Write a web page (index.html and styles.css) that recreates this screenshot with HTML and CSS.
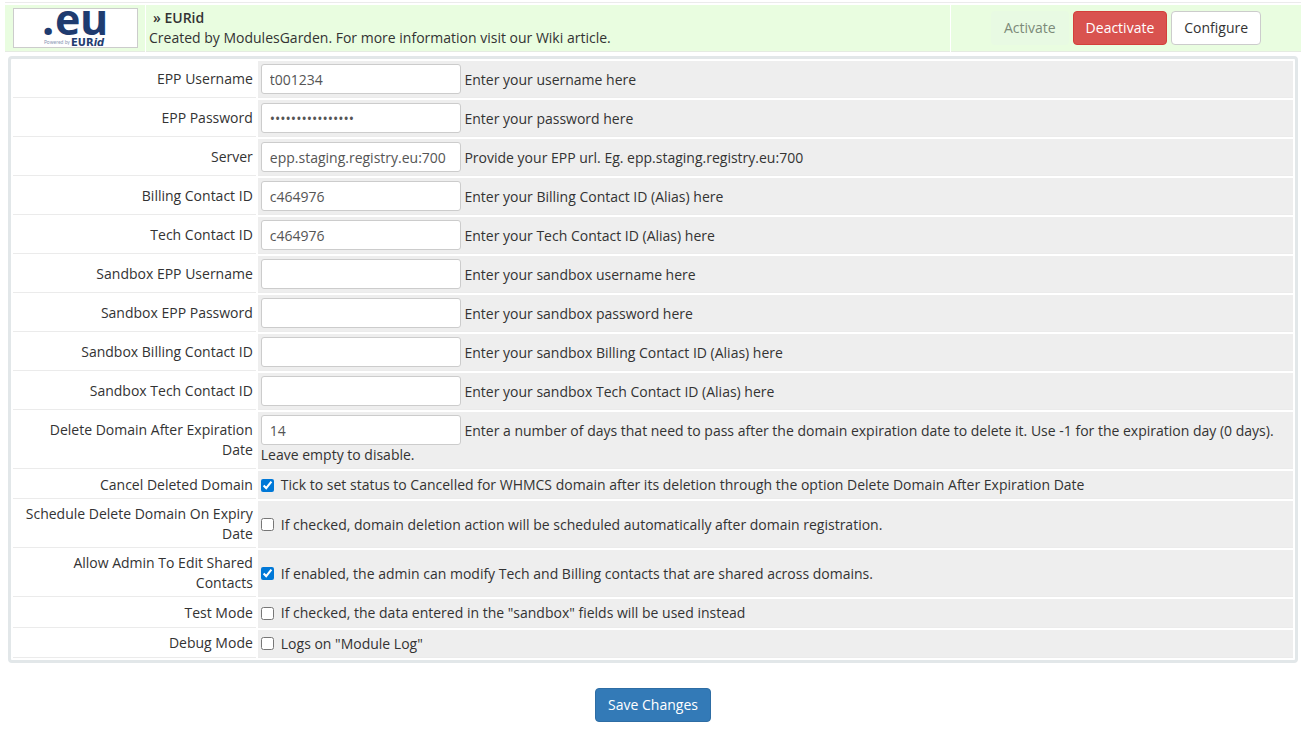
FILE: index.html
```
<!DOCTYPE html>
<html lang="en">
<head>
  <meta charset="UTF-8">
  <meta name="viewport" content="width=device-width, initial-scale=1.0">
  <title>Domain Registrars</title>
  <link rel="stylesheet" href="styles.css">
</head>
<body>
  <!-- Registrar header -->
  <div class="registrar">
    <div class="registrar-logo">
      <svg class="logo" width="125" height="40" viewBox="0 0 125 40" role="img" aria-label=".eu EURid">
        <rect x="0.5" y="0.5" width="124" height="39" fill="#fff" stroke="#ccc"/>
        <text class="logo-eu" x="29 42 67" y="27">.eu</text>
        <text class="logo-powered" x="31" y="36">Powered by</text>
        <text class="logo-eurid" x="58" y="38">EUR<tspan font-style="italic">id</tspan></text>
      </svg>
    </div>
    <div class="registrar-info">
      <strong class="registrar-name">» EURid</strong>
      <div>Created by ModulesGarden. For more information visit our Wiki article.</div>
    </div>
    <div class="registrar-actions">
      <button type="button" class="btn btn-activate" disabled>Activate</button>
      <button type="button" class="btn btn-danger">Deactivate</button>
      <button type="button" class="btn btn-default">Configure</button>
    </div>
  </div>

  <!-- Module settings -->
  <form class="config">
    <table class="form">
      <tr>
        <td class="fieldlabel"><label for="username">EPP Username</label></td>
        <td class="fieldarea"><input type="text" id="username" class="form-control" value="t001234"> Enter your username here</td>
      </tr>
      <tr>
        <td class="fieldlabel"><label for="password">EPP Password</label></td>
        <td class="fieldarea"><input type="password" id="password" class="form-control" value="abcdefgh12345678"> Enter your password here</td>
      </tr>
      <tr>
        <td class="fieldlabel"><label for="server">Server</label></td>
        <td class="fieldarea"><input type="text" id="server" class="form-control" value="epp.staging.registry.eu:700"> Provide your EPP url. Eg. epp.staging.registry.eu:700</td>
      </tr>
      <tr>
        <td class="fieldlabel"><label for="billing">Billing Contact ID</label></td>
        <td class="fieldarea"><input type="text" id="billing" class="form-control" value="c464976"> Enter your Billing Contact ID (Alias) here</td>
      </tr>
      <tr>
        <td class="fieldlabel"><label for="tech">Tech Contact ID</label></td>
        <td class="fieldarea"><input type="text" id="tech" class="form-control" value="c464976"> Enter your Tech Contact ID (Alias) here</td>
      </tr>
      <tr>
        <td class="fieldlabel"><label for="sandbox-username">Sandbox EPP Username</label></td>
        <td class="fieldarea"><input type="text" id="sandbox-username" class="form-control"> Enter your sandbox username here</td>
      </tr>
      <tr>
        <td class="fieldlabel"><label for="sandbox-password">Sandbox EPP Password</label></td>
        <td class="fieldarea"><input type="password" id="sandbox-password" class="form-control"> Enter your sandbox password here</td>
      </tr>
      <tr>
        <td class="fieldlabel"><label for="sandbox-billing">Sandbox Billing Contact ID</label></td>
        <td class="fieldarea"><input type="text" id="sandbox-billing" class="form-control"> Enter your sandbox Billing Contact ID (Alias) here</td>
      </tr>
      <tr>
        <td class="fieldlabel"><label for="sandbox-tech">Sandbox Tech Contact ID</label></td>
        <td class="fieldarea"><input type="text" id="sandbox-tech" class="form-control"> Enter your sandbox Tech Contact ID (Alias) here</td>
      </tr>
      <tr>
        <td class="fieldlabel"><label for="delete-days">Delete Domain After Expiration Date</label></td>
        <td class="fieldarea"><input type="text" id="delete-days" class="form-control" value="14"> Enter a number of days that need to pass after the domain expiration date to delete it. Use -1 for the expiration day (0 days). Leave empty to disable.</td>
      </tr>
      <tr class="check-row">
        <td class="fieldlabel"><label for="cancel-deleted">Cancel Deleted Domain</label></td>
        <td class="fieldarea"><input type="checkbox" id="cancel-deleted" checked><label for="cancel-deleted">Tick to set status to Cancelled for WHMCS domain after its deletion through the option Delete Domain After Expiration Date</label></td>
      </tr>
      <tr class="check-row">
        <td class="fieldlabel"><label for="schedule-delete">Schedule Delete Domain On Expiry Date</label></td>
        <td class="fieldarea"><input type="checkbox" id="schedule-delete"><label for="schedule-delete">If checked, domain deletion action will be scheduled automatically after domain registration.</label></td>
      </tr>
      <tr class="check-row">
        <td class="fieldlabel"><label for="edit-shared">Allow Admin To Edit Shared Contacts</label></td>
        <td class="fieldarea"><input type="checkbox" id="edit-shared" checked><label for="edit-shared">If enabled, the admin can modify Tech and Billing contacts that are shared across domains.</label></td>
      </tr>
      <tr class="check-row">
        <td class="fieldlabel"><label for="test-mode">Test Mode</label></td>
        <td class="fieldarea"><input type="checkbox" id="test-mode"><label for="test-mode">If checked, the data entered in the "sandbox" fields will be used instead</label></td>
      </tr>
      <tr class="check-row">
        <td class="fieldlabel"><label for="debug-mode">Debug Mode</label></td>
        <td class="fieldarea"><input type="checkbox" id="debug-mode"><label for="debug-mode">Logs on "Module Log"</label></td>
      </tr>
    </table>
    <div class="form-actions">
      <button type="submit" class="btn btn-primary">Save Changes</button>
    </div>
  </form>
</body>
</html>
```
FILE: styles.css
```
* {
  box-sizing: border-box;
}

body {
  margin: 0;
  padding: 2px 5px 0;
  background-color: #fff;
  color: #333;
  font-family: "Open Sans", sans-serif;
  font-size: 14px;
  line-height: 20px;
}

/* Registrar header */
.registrar {
  display: flex;
  gap: 1px;
  border-top: 1px solid #ebebeb;
  padding-top: 2px;
}

.registrar > div {
  background-color: #e9fde0;
  border-bottom: 1px solid #e5ebe2;
  padding: 3px;
}

.registrar-logo {
  width: 140px;
  text-align: center;
}

.logo {
  display: block;
  margin: 0 auto;
  overflow: visible;
}

.logo-eu {
  font-size: 43px;
  font-weight: 700;
  fill: #1f3c70;
}

.logo-powered {
  font-family: Lato, sans-serif;
  font-size: 5px;
  fill: #8b99b5;
}

.logo-eurid {
  font-family: "DejaVu Sans", sans-serif;
  font-size: 10px;
  font-weight: 700;
  fill: #1f3c70;
}

.registrar-info {
  flex: 1;
}

.registrar-name {
  margin-left: 4px;
  font-weight: 600;
}

.registrar-actions {
  width: 350px;
  display: flex;
  align-items: center;
  justify-content: center;
  gap: 4px;
}

/* Buttons */
.btn {
  height: 34px;
  padding: 0 12px;
  border: 1px solid transparent;
  border-radius: 4px;
  font-family: inherit;
  font-size: 14px;
  line-height: 20px;
  cursor: pointer;
}

.btn-activate {
  background-color: #e8fae3;
  color: #7c8a79;
  cursor: not-allowed;
}

.btn-danger {
  background-color: #d9534f;
  border-color: #d43f3a;
  color: #fff;
}

.btn-default {
  background-color: #fff;
  border-color: #ccc;
  color: #333;
}

.btn-primary {
  background-color: #337ab7;
  border-color: #2e6da4;
  color: #fff;
}

/* Settings table */
.config {
  padding: 4px 3px 8px;
}

.form {
  width: 100%;
  border: 3px solid #e2e7e9;
  border-radius: 4px;
  border-collapse: separate;
  border-spacing: 2px;
}

.form td {
  padding: 3px;
  border-bottom: 1px solid #ebebeb;
  vertical-align: middle;
}

.form .check-row td {
  height: 28px;
}

.fieldlabel {
  width: 19%;
  text-align: right;
}

.fieldarea {
  background-color: #eee;
}

.form-control {
  width: 200px;
  height: 30px;
  padding: 0 8px;
  border: 1px solid #ccc;
  border-radius: 3px;
  background-color: #fff;
  color: #555;
  font-family: inherit;
  font-size: 14px;
  vertical-align: baseline;
}

.fieldarea input[type="checkbox"] {
  width: 13px;
  height: 13px;
  margin: 0 7px 0 0;
  accent-color: #0078d7;
  vertical-align: middle;
}

.fieldarea label {
  vertical-align: middle;
}

.form-actions {
  padding-top: 25px;
  text-align: center;
}
```
